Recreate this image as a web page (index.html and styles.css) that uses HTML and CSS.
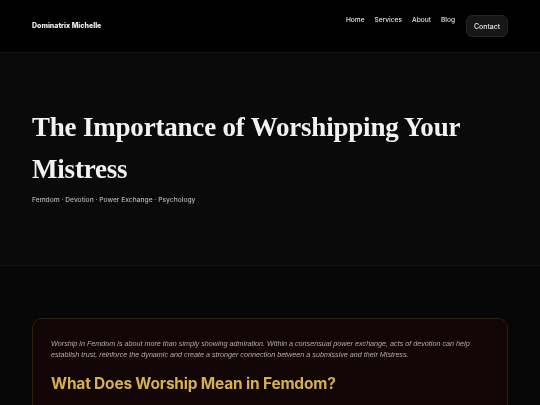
FILE: index.html
```html
<!DOCTYPE html>
<html lang="en">
<head>
<meta charset="utf-8">
<title>The Importance of Worshipping Your Mistress</title>
<link rel="stylesheet" href="styles.css">
</head>
<body>
<div class="page">
<header class="site-header">
  <div class="logo">Dominatrix Michelle</div>
  <nav class="nav">
    <a href="#" class="nav-link">Home</a>
    <a href="#" class="nav-link">Services</a>
    <a href="#" class="nav-link">About</a>
    <a href="#" class="nav-link">Blog</a>
    <a href="#" class="nav-btn">Contact</a>
  </nav>
</header>
<section class="hero">
  <h1 class="title">The Importance of Worshipping Your Mistress</h1>
  <p class="tags">Femdom · Devotion · Power Exchange · Psychology</p>
</section>
<main class="content">
  <article class="card">
    <p class="intro">Worship in Femdom is about more than simply showing admiration. Within a consensual power exchange, acts of devotion can help establish trust, reinforce the dynamic and create a stronger connection between a submissive and their Mistress.</p>
    <h2 class="heading">What Does Worship Mean in Femdom?</h2>
    <p class="body-text">Worship can take many forms, from ritual gestures and thoughtful service to attentive behaviour, following protocol and simply showing genuine respect to the one you serve.</p>
  </article>
</main>
</div>
</body>
</html>
```
FILE: styles.css
```css
* { box-sizing: border-box; }
html, body { margin: 0; padding: 0; }
body {
  background: #070707;
  color: #e8e8e8;
  font-family: Inter, "Liberation Sans", sans-serif;
}
.page {
  will-change: transform;
}
.site-header {
  display: flex;
  justify-content: space-between;
  align-items: flex-start;
  height: 53px;
  padding: 0 32px;
  background: #000;
  border-bottom: 1px solid #161616;
}
.logo {
  font-size: 7px;
  font-weight: 800;
  color: #f0f0f0;
  margin-top: 21px;
}
.nav {
  display: flex;
  align-items: flex-start;
  gap: 10px;
}
.nav-link {
  font-size: 6.6px;
  font-weight: 500;
  color: #e0e0e0;
  text-decoration: none;
  margin-top: 16px;
}
.nav-btn {
  margin-top: 15px;
  margin-left: 1px;
  height: 22px;
  padding: 0 7px;
  display: flex;
  align-items: center;
  font-size: 6.9px;
  font-weight: 500;
  color: #eaeaea;
  text-decoration: none;
  background: #171717;
  border: 1px solid #242424;
  border-radius: 6px;
}
.hero {
  background: #0a0a0a;
  padding: 53px 32px 0;
  border-bottom: 1px solid #141414;
  height: 213px;
}
.title {
  margin: 0;
  font-family: "Liberation Serif", serif;
  font-weight: 700;
  font-size: 27px;
  letter-spacing: -0.2px;
  line-height: 42px;
  color: #f2f2f2;
}
.tags {
  margin: 6px 0 0;
  font-size: 6.7px;
  font-weight: 500;
  color: #b4b4b4;
}
.content {
  padding: 52px 32px 0;
}
.card {
  background: #110505;
  border: 1px solid #2a2010;
  border-radius: 10px;
  padding: 19px 18px 20px;
}
.intro {
  margin: 0;
  font-family: "Liberation Sans", Arial, sans-serif;
  font-size: 7.2px;
  font-style: italic;
  line-height: 11px;
  color: #b4acac;
}
.heading {
  margin: 13px 0 0;
  font-size: 15.5px;
  font-weight: 700;
  letter-spacing: -0.2px;
  color: #d6b14a;
  line-height: 22px;
}
.body-text {
  margin: 12px 0 0;
  font-size: 7.4px;
  line-height: 11px;
  color: #b0a8a8;
}
```
